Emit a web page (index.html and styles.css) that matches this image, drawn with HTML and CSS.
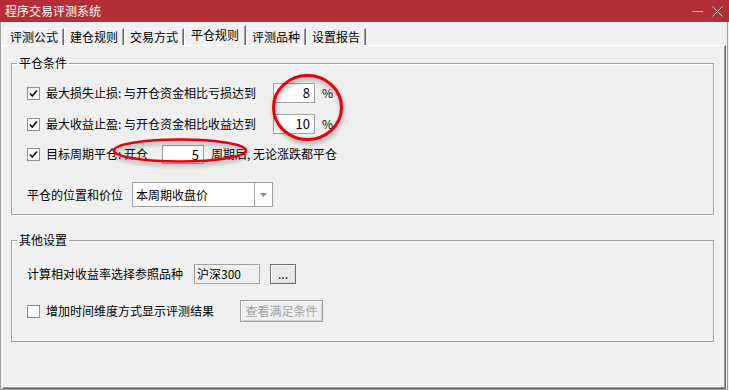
FILE: index.html
```html
<!DOCTYPE html>
<html>
<head>
  <meta charset="UTF-8">
  <link rel="stylesheet" href="styles.css">
</head>
<body>
  <div class="window">
    <!-- 标题栏 -->
    <div class="titlebar">
      <span class="title">程序交易评测系统</span>
      <div class="controls">
        <svg class="btn-min" width="11" height="11" viewBox="0 0 11 11"><line x1="0" y1="5.5" x2="11" y2="5.5" stroke="#f2c6c8" stroke-width="1"/></svg>
        <svg class="btn-close" width="11" height="11" viewBox="0 0 11 11"><path d="M0.5 0.5 L10.5 10.5 M10.5 0.5 L0.5 10.5" stroke="#f2c6c8" stroke-width="1" fill="none"/></svg>
      </div>
    </div>

    <div class="client">
      <!-- 标签页 -->
      <div class="tabs">
        <div class="tab">评测公式</div>
        <div class="tab">建仓规则</div>
        <div class="tab">交易方式</div>
        <div class="tab active">平仓规则</div>
        <div class="tab">评测品种</div>
        <div class="tab">设置报告</div>
      </div>

      <div class="panel">
        <!-- 平仓条件 -->
        <fieldset class="group group-close">
          <legend>平仓条件</legend>
          <div class="row">
            <span class="check on"><svg width="11" height="11" viewBox="0 0 11 11"><path d="M2 5.5 L4.3 8 L9 2.5" stroke="#111" stroke-width="1.8" fill="none"/></svg></span>
            <span class="label label-wide">最大损失止损: 与开仓资金相比亏损达到</span>
            <span class="edit">8</span>
            <span class="unit">%</span>
          </div>
          <div class="row row-profit">
            <span class="check on"><svg width="11" height="11" viewBox="0 0 11 11"><path d="M2 5.5 L4.3 8 L9 2.5" stroke="#111" stroke-width="1.8" fill="none"/></svg></span>
            <span class="label label-wide">最大收益止盈: 与开仓资金相比收益达到</span>
            <span class="edit">10</span>
            <span class="unit">%</span>
          </div>
          <div class="row row-period">
            <span class="check on"><svg width="11" height="11" viewBox="0 0 11 11"><path d="M2 5.5 L4.3 8 L9 2.5" stroke="#111" stroke-width="1.8" fill="none"/></svg></span>
            <span class="label label-period">目标周期平仓: 开仓</span>
            <span class="edit short">5</span>
            <span class="unit">周期后, 无论涨跌都平仓</span>
          </div>
          <div class="row row-select">
            <span class="label label-pos">平仓的位置和价位</span>
            <div class="combo">
              <span class="combo-text">本周期收盘价</span>
              <span class="combo-btn"><svg width="7" height="4" viewBox="0 0 7 4"><path d="M0 0 L7 0 L3.5 4 Z" fill="#8a8a8a"/></svg></span>
            </div>
          </div>
        </fieldset>

        <!-- 其他设置 -->
        <fieldset class="group group-other">
          <legend>其他设置</legend>
          <div class="row">
            <span class="label label-ref">计算相对收益率选择参照品种</span>
            <span class="edit readonly">沪深300</span>
            <span class="button small">...</span>
          </div>
          <div class="row row-time">
            <span class="check"></span>
            <span class="label label-time">增加时间维度方式显示评测结果</span>
            <span class="button disabled">查看满足条件</span>
          </div>
        </fieldset>
      </div>
    </div>

    <!-- 红色标注 -->
    <svg class="marks" width="729" height="390" viewBox="0 0 729 390">
      <defs>
        <filter id="soft" x="-20%" y="-20%" width="140%" height="160%">
          <feDropShadow dx="1" dy="3" stdDeviation="2" flood-color="#000" flood-opacity="0.35"/>
        </filter>
      </defs>
      <ellipse cx="307.5" cy="107.5" rx="34" ry="32" fill="none" stroke="#e6000a" stroke-width="3" filter="url(#soft)"/>
      <ellipse cx="180" cy="150.5" rx="66" ry="11" fill="none" stroke="#e6000a" stroke-width="2.6" filter="url(#soft)"/>
    </svg>
  </div>
</body>
</html>
```

FILE: styles.css
```css
* {
  box-sizing: border-box;
}

body {
  margin: 0;
  background: #f0f0f0;
  font-family: "Noto Sans CJK SC", "Liberation Sans", sans-serif;
  font-size: 12px;
  color: #000;
}

.window {
  position: relative;
  width: 729px;
  height: 390px;
  overflow: hidden;
}

/* 标题栏 */
.titlebar {
  display: flex;
  align-items: center;
  justify-content: space-between;
  height: 22px;
  padding: 0 6px 0 5px;
  background: #b42e35;
  color: #fff;
  line-height: 14px;
}

.controls {
  display: flex;
  align-items: center;
  gap: 9px;
}

/* 客户区 */
.client {
  height: 368px;
  border-left: 1px solid #a0a0a0;
  border-right: 1px solid #a0a0a0;
  border-bottom: 1px solid #a0a0a0;
  margin-right: 1px;
}

.tabs {
  display: flex;
  align-items: flex-end;
  height: 23px;
  padding-left: 3px;
}

.tab {
  width: 60px;
  height: 17px;
  border-top: 1px solid #fff;
  border-left: 1px solid #fff;
  border-right: 1px solid #696969;
  box-shadow: inset -1px 0 0 #a0a0a0;
  line-height: 15px;
  text-align: center;
}

.tab.active {
  height: 20px;
  width: 62px;
  line-height: 17px;
}

.panel {
  height: 344px;
  margin-left: 1px;
  width: 724px;
  padding: 10px 0 0 8px;
  border-top: 1px solid #fff;
  border-left: 1px solid #fff;
  border-right: 1px solid #696969;
  border-bottom: 1px solid #696969;
  box-shadow: inset -1px -1px 0 #a0a0a0;
}

/* 分组框 */
.group {
  display: block;
  width: 703px;
  margin: 0;
  min-width: 0;
  border: 1px solid #a0a0a0;
  box-shadow: 1px 1px 0 #fff, inset 1px 1px 0 #fff;
}

.group legend {
  margin-left: -10px;
  padding: 0 2px;
  line-height: 14px;
}

.group-close {
  padding: 13px 15px 7px;
}

.group-other {
  margin-top: 18px;
  padding: 17px 15px 19px;
}

.row {
  display: flex;
  align-items: center;
  height: 20px;
  line-height: 14px;
}

.row-profit {
  margin-top: 11px;
}

.row-period {
  margin-top: 10px;
}

.row-select {
  height: 25px;
  margin-top: 18px;
}

.row-time {
  height: 22px;
  margin-top: 16px;
}

/* 复选框 */
.check {
  display: flex;
  align-items: center;
  justify-content: center;
  width: 13px;
  height: 13px;
  background: #fff;
  border: 1px solid #8e8f8f;
  margin-right: 6px;
}

.label-wide {
  width: 227px;
}

.label-period {
  width: 116px;
}

.label-pos {
  width: 105px;
}

.label-ref {
  width: 167px;
}

.label-time {
  width: 194px;
}

/* 输入框 */
.edit {
  width: 42px;
  height: 20px;
  padding: 0 4px;
  background: #fff;
  border: 1px solid #a0a0a0;
  text-align: right;
  line-height: 18px;
  font-size: 13px;
}

.edit.short {
  height: 19px;
}

.edit.readonly {
  width: 66px;
  background: #f0f0f0;
  text-align: left;
  padding: 0 2px;
  font-size: 12px;
}

.unit {
  margin-left: 7px;
}

/* 下拉框 */
.combo {
  display: flex;
  width: 141px;
  height: 25px;
  background: #fff;
  border: 1px solid #a0a0a0;
}

.combo-text {
  flex: 1;
  padding-left: 3px;
  line-height: 23px;
}

.combo-btn {
  display: flex;
  align-items: center;
  justify-content: center;
  width: 18px;
  border-left: 1px solid #a0a0a0;
}

/* 按钮 */
.button {
  display: flex;
  align-items: center;
  justify-content: center;
  height: 20px;
  border: 1px solid #707070;
  box-shadow: inset 1px 1px 0 #fff, inset -1px -1px 0 #d5d5d5;
  background: #e9e9e9;
}

.button.small {
  width: 26px;
  margin-left: 10px;
  line-height: 10px;
}

.button.disabled {
  width: 83px;
  height: 22px;
  color: #a0a0a0;
  border-color: #a0a0a0;
  background: #f0f0f0;
}

/* 标注层 */
.marks {
  position: absolute;
  left: 0;
  top: 0;
  pointer-events: none;
}
```
